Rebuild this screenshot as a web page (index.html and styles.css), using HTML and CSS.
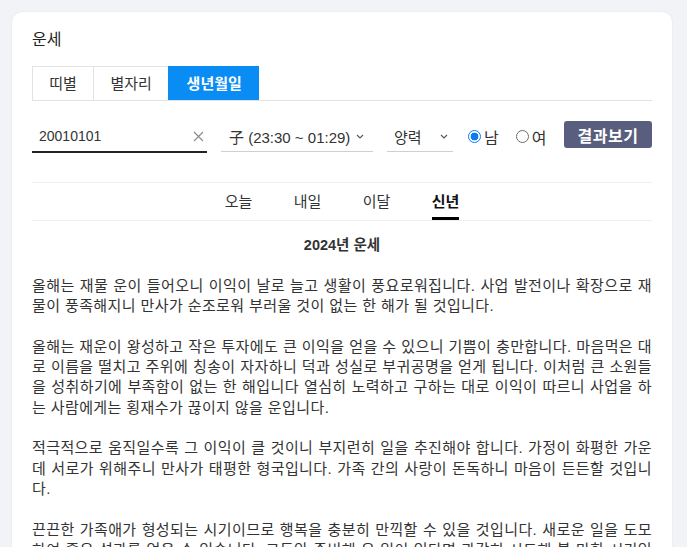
FILE: index.html
```html
<!DOCTYPE html>
<html lang="ko">
<head>
<meta charset="utf-8">
<title>운세</title>
<link rel="stylesheet" href="styles.css">
</head>
<body>
<main class="card">
  <h1 class="card-title">운세</h1>
  <nav class="tabs">
    <a class="tab">띠별</a>
    <a class="tab">별자리</a>
    <a class="tab tab-active">생년월일</a>
  </nav>

  <form class="form-row">
    <div class="field field-date">
      <span class="field-value">20010101</span>
      <svg class="clear-icon" width="11" height="11" viewBox="0 0 11 11"><path d="M1 1L10 10M10 1L1 10" stroke="#8a8a8a" stroke-width="1.1" fill="none"/></svg>
    </div>
    <div class="field field-time">
      <span class="field-value">子 (23:30 ~ 01:29)</span>
      <svg class="chev" width="8" height="5" viewBox="0 0 8 5"><path d="M1 1L4 4L7 1" stroke="#555" stroke-width="1.1" fill="none"/></svg>
    </div>
    <div class="field field-cal">
      <span class="field-value">양력</span>
      <svg class="chev" width="8" height="5" viewBox="0 0 8 5"><path d="M1 1L4 4L7 1" stroke="#555" stroke-width="1.1" fill="none"/></svg>
    </div>
    <div class="radios">
      <label class="radio"><input type="radio" name="g" checked><span>남</span></label>
      <label class="radio"><input type="radio" name="g"><span>여</span></label>
    </div>
    <button type="button" class="btn">결과보기</button>
  </form>

  <nav class="subtabs">
    <a class="subtab"><span>오늘</span></a>
    <a class="subtab"><span>내일</span></a>
    <a class="subtab"><span>이달</span></a>
    <a class="subtab subtab-active"><span>신년</span></a>
  </nav>

  <h2 class="result-title">2024년 운세</h2>
  <div class="result">
    <p>올해는 재물 운이 들어오니 이익이 날로 늘고 생활이 풍요로워집니다. 사업 발전이나 확장으로 재물이 풍족해지니 만사가 순조로워 부러울 것이 없는 한 해가 될 것입니다.</p>
    <p>올해는 재운이 왕성하고 작은 투자에도 큰 이익을 얻을 수 있으니 기쁨이 충만합니다. 마음먹은 대로 이름을 떨치고 주위에 칭송이 자자하니 덕과 성실로 부귀공명을 얻게 됩니다. 이처럼 큰 소원들을 성취하기에 부족함이 없는 한 해입니다 열심히 노력하고 구하는 대로 이익이 따르니 사업을 하는 사람에게는 횡재수가 끊이지 않을 운입니다.</p>
    <p>적극적으로 움직일수록 그 이익이 클 것이니 부지런히 일을 추진해야 합니다. 가정이 화평한 가운데 서로가 위해주니 만사가 태평한 형국입니다. 가족 간의 사랑이 돈독하니 마음이 든든할 것입니다.</p>
    <p>끈끈한 가족애가 형성되는 시기이므로 행복을 충분히 만끽할 수 있을 것입니다. 새로운 일을 도모하여 좋은 성과를 얻을 수 있습니다. 그동안 준비해 온 일이 있다면 과감히 시도해 볼 만한 시기입니다.</p>
  </div>
</main>
</body>
</html>
```

FILE: styles.css
```css
html, body {
  margin: 0;
  padding: 0;
}
body {
  background: #f2f3f7;
  font-family: "Liberation Sans", "Noto Sans CJK KR", sans-serif;
  color: #333;
  overflow: hidden;
}
.card {
  display: block;
  margin: 12px 15px 0 12px;
  background: #fff;
  border-radius: 10px;
  box-shadow: 0 0 0 1px #eceef2;
  padding: 16px 20px 40px;
  min-height: 600px;
}
.card-title {
  margin: 0;
  font-size: 16px;
  line-height: 24px;
  font-weight: 400;
  color: #222;
}
.tabs {
  display: flex;
  margin-top: 14px;
  border-bottom: 1px solid #e3e3e3;
}
.tab {
  display: block;
  height: 33px;
  line-height: 33px;
  padding: 0 16.3px;
  font-size: 15px;
  color: #333;
  border-top: 1px solid #e3e3e3;
  border-left: 1px solid #e3e3e3;
}
.tab-active {
  background: #0a8cf5;
  border-color: #0a8cf5;
  color: #fff;
  font-weight: 700;
  padding: 0 17.4px;
}
.form-row {
  display: flex;
  align-items: flex-start;
  gap: 14px;
  margin-top: 20px;
}
.field {
  display: flex;
  align-items: center;
  height: 31px;
  box-sizing: border-box;
  border-bottom: 1px solid #cfcfcf;
  font-size: 15px;
  color: #333;
}
.field-value {
  white-space: nowrap;
}
.field-date {
  width: 175px;
  padding: 0 3px 0 7px;
  border-bottom: 2px solid #222;
  font-size: 14px;
  height: 32px;
  justify-content: space-between;
}
.field-time {
  width: 152px;
  padding: 0 7px 0 8px;
}
.chev {
  margin-left: 6px;
  margin-top: 1px;
}
.field-cal {
  width: 66px;
  padding: 0 5px 0 7px;
  justify-content: space-between;
}
.radios {
  display: flex;
  align-items: center;
  gap: 17px;
  height: 31px;
  margin-left: 1px;
}
.radio {
  display: flex;
  align-items: center;
  gap: 3px;
  font-size: 16px;
  color: #333;
}
.radio input {
  appearance: none;
  -webkit-appearance: none;
  margin: 0;
  width: 13px;
  height: 13px;
  border: 1px solid #6e6e6e;
  border-radius: 50%;
  background: #fff;
}
.radio input:checked {
  border-color: #0a7cf0;
  background: radial-gradient(circle, #0a7cf0 0 3.6px, #fff 4.2px);
}
.btn {
  margin-left: auto;
  width: 88px;
  height: 27px;
  border: 0;
  border-radius: 3px;
  background: #5a5e7e;
  color: #fff;
  font-family: inherit;
  font-size: 16px;
  letter-spacing: 0.5px;
  font-weight: 700;
  padding: 0;
}
.subtabs {
  display: flex;
  justify-content: center;
  margin-top: 29px;
  border-top: 1px solid #efefef;
  border-bottom: 1px solid #efefef;
  height: 37px;
}
.subtab {
  display: block;
  padding: 9px 20.7px 0;
  font-size: 15px;
  color: #333;
}
.subtab span {
  display: block;
  line-height: 20px;
  padding-bottom: 5px;
}
.subtab-active {
  font-weight: 700;
  color: #111;
}
.subtab-active span {
  border-bottom: 3px solid #000;
}
.result-title {
  margin: 14px 0 0;
  text-align: center;
  font-size: 14.5px;
  line-height: 20px;
  font-weight: 700;
  color: #333;
}
.result {
  margin-top: 21px;
  font-size: 15px;
  line-height: 20.3px;
  letter-spacing: 0.4px;
  text-align: justify;
  color: #333;
}
.result p {
  margin: 0 0 20.3px;
}
```
